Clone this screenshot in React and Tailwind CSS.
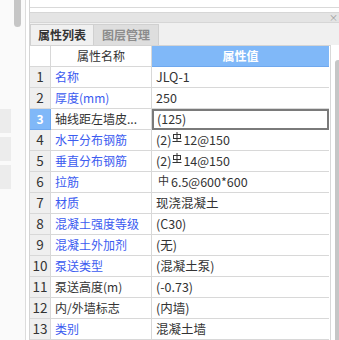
import React from "react";

const rows = [
  { no: 1, name: "名称", blue: true, value: "JLQ-1" },
  { no: 2, name: "厚度(mm)", blue: true, value: "250" },
  { no: 3, name: "轴线距左墙皮...", blue: false, value: "(125)", active: true },
  { no: 4, name: "水平分布钢筋", blue: true, value: ["(2)", "rebar", "12@150"] },
  { no: 5, name: "垂直分布钢筋", blue: true, value: ["(2)", "rebar", "14@150"] },
  { no: 6, name: "拉筋", blue: true, value: ["hpb", "6.5@600*600"] },
  { no: 7, name: "材质", blue: true, value: "现浇混凝土" },
  { no: 8, name: "混凝土强度等级", blue: true, value: "(C30)" },
  { no: 9, name: "混凝土外加剂", blue: true, value: "(无)" },
  { no: 10, name: "泵送类型", blue: true, value: "(混凝土泵)" },
  { no: 11, name: "泵送高度(m)", blue: false, value: "(-0.73)" },
  { no: 12, name: "内/外墙标志", blue: false, value: "(内墙)" },
  { no: 13, name: "类别", blue: true, value: "混凝土墙" },
];

function Rebar() {
  return (
    <svg width="10" height="11" viewBox="0 0 10 11" className="inline-block mx-[1px] -translate-y-[3px]">
      <rect x="1.5" y="2.5" width="7" height="4" fill="none" stroke="#333" strokeWidth="1" />
      <path d="M5 0 V9 M0.5 9.5 H9.5" stroke="#333" strokeWidth="1" fill="none" />
    </svg>
  );
}

function Value({ value }) {
  if (typeof value === "string") return <span>{value}</span>;
  return (
    <span className="flex items-center">
      {value.map((part, i) => {
        if (part === "rebar") return <Rebar key={i} />;
        if (part === "hpb")
          return (
            <span key={i} className="text-[11px] mx-[2px] -translate-y-[2px] inline-block">
              中
            </span>
          );
        return <span key={i}>{part}</span>;
      })}
    </span>
  );
}

export default function App() {
  return (
    <div
      className="w-[339px] h-[340px] flex bg-white overflow-hidden text-[#333]"
      style={{ fontFamily: '"Noto Sans CJK SC", "Noto Sans", sans-serif' }}
    >
      {/* left strip */}
      <div className="w-[26px] shrink-0 bg-[#fafafa] border-r border-[#dcdcdc] flex flex-col">
        <div className="ml-[14px] w-[7px] h-[27px] bg-[#c6c6c6] rounded-b-full" />
        <div className="mt-[82px] flex flex-col gap-[4px]">
          <div className="w-[11px] h-[24px] bg-[#ececec]" />
          <div className="w-[11px] h-[24px] bg-[#ececec]" />
          <div className="w-[11px] h-[24px] bg-[#ececec]" />
        </div>
      </div>
      <div className="w-[4px] shrink-0 bg-white border-r border-[#d4d4d4]" />

      {/* main panel */}
      <div className="flex-1 flex flex-col">
        <div className="h-[8px] border-b border-[#d9d9d9] bg-white" />
        <div className="h-[4px] bg-white" />
        <div className="h-[11px] bg-[#e4e4e4] border-y border-[#d6d6d6] flex justify-end items-center pr-[1px] text-[9px] leading-none text-[#999]">
          ×
        </div>
        <div className="h-[23px] bg-[#f0f0f0] flex items-end">
          <div className="w-[64px] h-[21px] bg-[#f0f0f0] border border-b-0 border-[#d0d0d0] flex items-center justify-center text-[12px] font-bold text-[#333]">
            属性列表
          </div>
          <div className="w-[65px] h-[21px] bg-[#dedede] border-t border-r border-[#d0d0d0] flex items-center justify-center text-[12px] font-bold text-[#8c8c8c]">
            图层管理
          </div>
        </div>

        <div className="flex flex-1">
          <div className="w-[300px] shrink-0 border-t border-[#d4d4d4]">
            <div className="grid grid-cols-[21px_101px_177px] h-[21px] text-[12px]">
              <div className="bg-white border-r border-b border-[#d8d8d8]" />
              <div className="bg-white border-r border-b border-[#d8d8d8] flex items-center justify-center">
                属性名称
              </div>
              <div className="bg-[#80b8f8] border-b border-[#6fa8ee] flex items-center justify-center text-white font-bold">
                属性值
              </div>
            </div>
            {rows.map((r) => (
              <div key={r.no} className="grid grid-cols-[21px_101px_177px] h-[21px] leading-none">
                <div
                  className={
                    r.active
                      ? "bg-[#80b8f8] text-white font-bold border-r border-b border-[#6fa8ee] flex items-center justify-center text-[12px]"
                      : "bg-[#efefef] border-r border-b border-[#d8d8d8] flex items-center justify-center text-[13.5px]"
                  }
                >
                  {r.no}
                </div>
                <div
                  className={`border-r border-b border-[#d8d8d8] flex items-center pl-[4px] whitespace-nowrap text-[12px] ${
                    r.blue ? "text-[#3b5bf0]" : "text-[#333]"
                  }`}
                >
                  {r.name}
                </div>
                <div
                  className={
                    r.active
                      ? "border-2 border-[#7a7a7a] flex items-center pl-[3px] whitespace-nowrap text-[12.5px]"
                      : "border-b border-[#d8d8d8] flex items-center pl-[4px] whitespace-nowrap text-[12.5px]"
                  }
                >
                  <Value value={r.value} />
                </div>
              </div>
            ))}
          </div>
          <div className="w-[1px] shrink-0 bg-[#d8d8d8]" />
          <div className="flex-1 flex justify-end pt-[15px]">
            <div className="w-[4px] h-full bg-[#c6c6c6] rounded-tl-[3px]" />
          </div>
        </div>
      </div>
    </div>
  );
}
